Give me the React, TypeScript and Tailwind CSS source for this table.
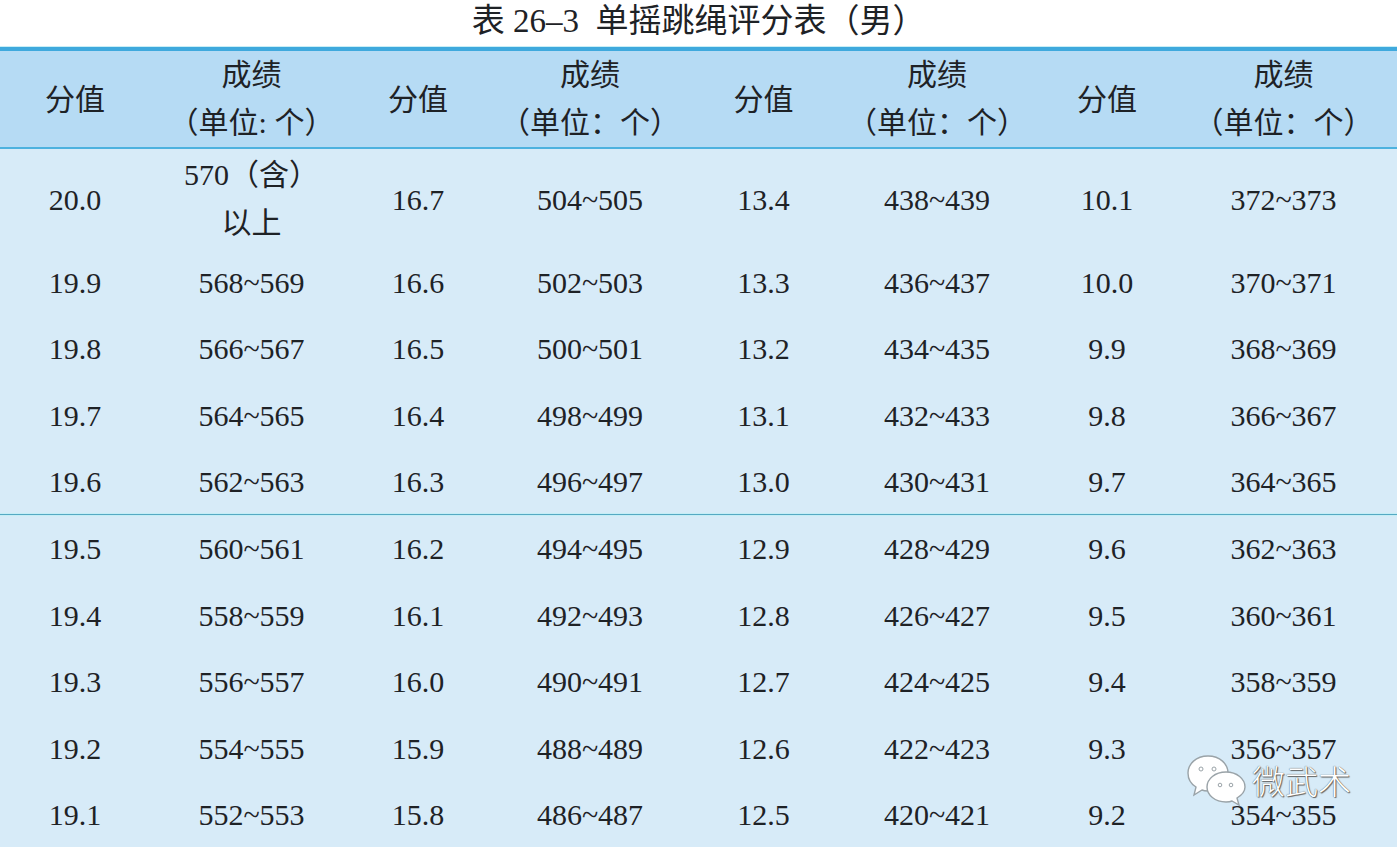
import React from 'react';

const FONT = '"Liberation Serif", "Noto Sans CJK SC", serif';

type Row = [string, React.ReactNode, string, string, string, string, string, string];

const ROWS_TOP: Row[] = [
  ['19.9', '568~569', '16.6', '502~503', '13.3', '436~437', '10.0', '370~371'],
  ['19.8', '566~567', '16.5', '500~501', '13.2', '434~435', '9.9', '368~369'],
  ['19.7', '564~565', '16.4', '498~499', '13.1', '432~433', '9.8', '366~367'],
  ['19.6', '562~563', '16.3', '496~497', '13.0', '430~431', '9.7', '364~365'],
];

const ROWS_BOTTOM: Row[] = [
  ['19.5', '560~561', '16.2', '494~495', '12.9', '428~429', '9.6', '362~363'],
  ['19.4', '558~559', '16.1', '492~493', '12.8', '426~427', '9.5', '360~361'],
  ['19.3', '556~557', '16.0', '490~491', '12.7', '424~425', '9.4', '358~359'],
  ['19.2', '554~555', '15.9', '488~489', '12.6', '422~423', '9.3', '356~357'],
  ['19.1', '552~553', '15.8', '486~487', '12.5', '420~421', '9.2', '354~355'],
];

const GRID = 'grid grid-cols-[150px_203px_130px_214px_133px_214px_126px_227px]';

const BodyRow = ({ row, h }: { row: Row; h: string }) => (
  <div className={`${GRID} ${h}`}>
    {row.map((cell, i) => (
      <div key={i} className="flex items-center justify-center text-center pt-[1px]">
        {cell}
      </div>
    ))}
  </div>
);

const HeadScore = ({ unit }: { unit: string }) => (
  <div className="flex flex-col items-center justify-center leading-[48px]">
    <span>成绩</span>
    <span>{unit}</span>
  </div>
);

const WeChatMark = () => (
  <div className="absolute left-[1186px] top-[752px] flex items-center gap-[4px] pointer-events-none">
    <svg width="62" height="56" viewBox="0 0 62 56">
      <path
        d="M22 4 C10 4 2 12 2 21 C2 27 5 32 10 35 L8 43 L16 38 C18 39 20 39 22 39 C34 39 42 31 42 21 C42 12 34 4 22 4 Z"
        fill="#fff"
        stroke="#9aa3a8"
        strokeWidth="1.4"
      />
      <circle cx="15" cy="17" r="2" fill="#fff" stroke="#9aa3a8" strokeWidth="1" />
      <circle cx="28" cy="17" r="2" fill="#fff" stroke="#9aa3a8" strokeWidth="1" />
      <path
        d="M40 20 C29 20 21 27 21 35 C21 43 29 50 40 50 C42 50 44 50 46 49 L53 53 L51 46 C56 43 59 39 59 35 C59 27 51 20 40 20 Z"
        fill="#fff"
        stroke="#9aa3a8"
        strokeWidth="1.4"
      />
      <circle cx="34" cy="33" r="1.8" fill="#fff" stroke="#9aa3a8" strokeWidth="1" />
      <circle cx="45" cy="33" r="1.8" fill="#fff" stroke="#9aa3a8" strokeWidth="1" />
    </svg>
    <span
      className="text-[33px] leading-none text-white [text-shadow:0_0_1px_#333,1px_1px_1px_#666]"
      style={{ fontFamily: '"Noto Sans CJK SC", sans-serif', fontWeight: 300 }}
    >
      微武术
    </span>
  </div>
);

export default function App() {
  return (
    <div
      className="relative w-[1397px] h-[847px] overflow-hidden bg-white text-[#1e2226]"
      style={{ fontFamily: FONT }}
    >
      <div className="h-[46px] flex items-center justify-center text-[33px] leading-none pb-[4px]">
        表 26–3&nbsp; 单摇跳绳评分表（男）
      </div>
      <div className="h-[1px] bg-[#c9eef6]" />
      <div className="h-[4px] bg-[#3fa9dd]" />

      {/* header */}
      <div className={`${GRID} h-[96px] bg-[#b6dbf4] text-[30px]`}>
        <div className="flex items-center justify-center">分值</div>
        <HeadScore unit="（单位: 个）" />
        <div className="flex items-center justify-center">分值</div>
        <HeadScore unit="（单位：个）" />
        <div className="flex items-center justify-center">分值</div>
        <HeadScore unit="（单位：个）" />
        <div className="flex items-center justify-center">分值</div>
        <HeadScore unit="（单位：个）" />
      </div>
      <div className="h-[2px] bg-[#4db2df]" />

      {/* body */}
      <div className="bg-[#d7ebf8] text-[30px] h-[699px]">
        <div className={`${GRID} h-[100px]`}>
          <div className="flex items-center justify-center pt-[1px]">20.0</div>
          <div className="flex flex-col items-center justify-center leading-[48px]">
            <span>570（含）</span>
            <span>以上</span>
          </div>
          <div className="flex items-center justify-center pt-[1px]">16.7</div>
          <div className="flex items-center justify-center pt-[1px]">504~505</div>
          <div className="flex items-center justify-center pt-[1px]">13.4</div>
          <div className="flex items-center justify-center pt-[1px]">438~439</div>
          <div className="flex items-center justify-center pt-[1px]">10.1</div>
          <div className="flex items-center justify-center pt-[1px]">372~373</div>
        </div>
        {ROWS_TOP.map((r) => (
          <BodyRow key={r[0]} row={r} h="h-[66.25px]" />
        ))}
        <div className="h-[1px] bg-[#55a9c3] shadow-[0_0_1px_1px_#c4eef6]" />
        {ROWS_BOTTOM.map((r) => (
          <BodyRow key={r[0]} row={r} h="h-[66.5px]" />
        ))}
      </div>

      <WeChatMark />
    </div>
  );
}
